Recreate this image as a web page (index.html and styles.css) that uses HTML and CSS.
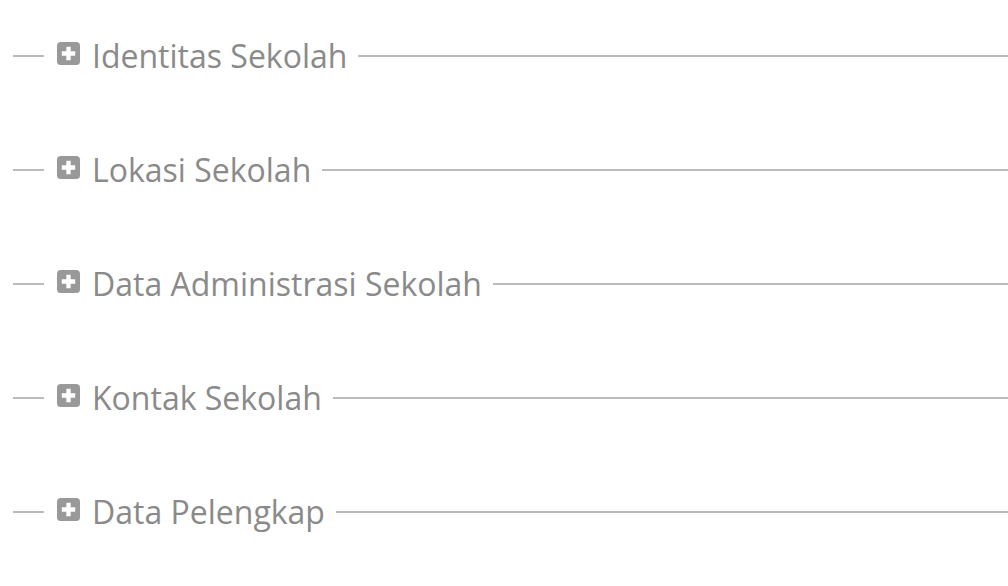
FILE: index.html
```html
<!DOCTYPE html>
<html lang="en">

<head>
    <meta charset="UTF-8">
    <meta name="viewport" content="width=device-width, initial-scale=1.0">
    <title>Profil Sekolah</title>
    <link rel="stylesheet" href="styles.css">
</head>

<body>
    <div class="container">
        <!-- Identitas -->
        <fieldset class="section collapsed">
            <legend>
                <svg class="toggle-icon" viewBox="0 0 24 24"><rect width="24" height="24" rx="4" /><path d="M12 5v14M5 12h14" /></svg>
                <span>Identitas Sekolah</span>
            </legend>
        </fieldset>

        <!-- Lokasi -->
        <fieldset class="section collapsed">
            <legend>
                <svg class="toggle-icon" viewBox="0 0 24 24"><rect width="24" height="24" rx="4" /><path d="M12 5v14M5 12h14" /></svg>
                <span>Lokasi Sekolah</span>
            </legend>
        </fieldset>

        <!-- Administrasi -->
        <fieldset class="section collapsed">
            <legend>
                <svg class="toggle-icon" viewBox="0 0 24 24"><rect width="24" height="24" rx="4" /><path d="M12 5v14M5 12h14" /></svg>
                <span>Data Administrasi Sekolah</span>
            </legend>
        </fieldset>

        <!-- Kontak -->
        <fieldset class="section collapsed">
            <legend>
                <svg class="toggle-icon" viewBox="0 0 24 24"><rect width="24" height="24" rx="4" /><path d="M12 5v14M5 12h14" /></svg>
                <span>Kontak Sekolah</span>
            </legend>
        </fieldset>

        <!-- Pelengkap -->
        <fieldset class="section collapsed">
            <legend>
                <svg class="toggle-icon" viewBox="0 0 24 24"><rect width="24" height="24" rx="4" /><path d="M12 5v14M5 12h14" /></svg>
                <span>Data Pelengkap</span>
            </legend>
        </fieldset>
    </div>
</body>

</html>
```

FILE: styles.css
```css
body {
    font-family: "Open Sans", Arial, sans-serif;
    margin: 0;
    padding: 0;
    background-color: #fff;
    color: #8a8a8a;
}

.container {
    padding-top: 35px;
    padding-left: 13px;
}

.section {
    margin: 0 0 72px 0;
    padding: 0 0 0 31px;
    border: none;
    border-top: 2px solid #bbb;
    min-width: 0;
}

.section legend {
    display: flex;
    align-items: center;
    gap: 12px;
    padding: 0 11px 0 13px;
    font-size: 32px;
    line-height: 42px;
    height: 42px;
}

.toggle-icon {
    width: 23px;
    height: 23px;
    margin-top: -5px;
}

.toggle-icon rect {
    fill: #999;
}

.toggle-icon path {
    stroke: #fff;
    stroke-width: 4.5;
}
```
